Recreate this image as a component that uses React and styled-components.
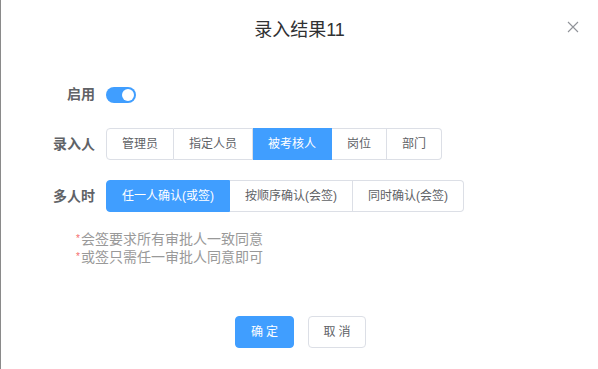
import styled, { createGlobalStyle } from 'styled-components'

const Global = createGlobalStyle`
  html, body {
    margin: 0;
    padding: 0;
    background: #fff;
  }
  body {
    font-family: "Liberation Sans", "Noto Sans CJK SC", sans-serif;
    color: #606266;
  }
`

const Page = styled.div`
  width: 598px;
  height: 369px;
  box-sizing: border-box;
  border-left: 1px solid #8a8a8a;
  background: #fff;
  display: flex;
  flex-direction: column;
`

const Header = styled.div`
  height: 58px;
  display: flex;
  align-items: center;
  justify-content: center;
  position: relative;
`

const Title = styled.div`
  font-size: 18px;
  line-height: 24px;
  color: #303133;
  margin-top: 2px;
`

const Close = styled.button`
  position: absolute;
  right: 19px;
  top: 21px;
  width: 12px;
  height: 12px;
  padding: 0;
  border: 0;
  background: none;
  cursor: pointer;
  display: flex;
`

const Form = styled.div`
  display: flex;
  flex-direction: column;
  margin-top: 20px;
`

const Row = styled.div`
  display: flex;
  align-items: center;
  height: 32px;
  margin-bottom: ${p => p.$gap || 20}px;
`

const Label = styled.label`
  width: 94px;
  padding-right: 11px;
  text-align: right;
  font-size: 14px;
  font-weight: 700;
  color: #606266;
  line-height: 32px;
`

const Switch = styled.span`
  width: 30px;
  height: 16px;
  border-radius: 8px;
  background: #409eff;
  position: relative;
  margin-top: 2px;
  &::after {
    content: '';
    position: absolute;
    right: 2px;
    top: 2px;
    width: 12px;
    height: 12px;
    border-radius: 50%;
    background: #fff;
  }
`

const Group = styled.div`
  display: flex;
`

const Seg = styled.button`
  font-family: inherit;
  font-size: 12px;
  line-height: 12px;
  height: 32px;
  padding: 0 15px;
  border: 1px solid ${p => (p.$active ? '#409eff' : '#dcdfe6')};
  border-left-width: 0;
  background: ${p => (p.$active ? '#409eff' : '#fff')};
  color: ${p => (p.$active ? '#fff' : '#606266')};
  cursor: pointer;
  &:first-child {
    border-left-width: 1px;
    border-radius: 4px 0 0 4px;
  }
  &:last-child {
    border-radius: 0 4px 4px 0;
  }
`

const Notes = styled.div`
  margin: 0 0 0 75px;
  font-size: 14px;
  line-height: 18px;
  color: #999;
`

const Star = styled.span`
  color: #f56c6c;
  font-size: 10px;
  margin-right: 1px;
  vertical-align: 2px;
`

const Footer = styled.div`
  display: flex;
  justify-content: center;
  gap: 14px;
  margin-top: 50px;
  padding-left: 2px;
`

const Btn = styled.button`
  font-family: inherit;
  font-size: 12px;
  line-height: 12px;
  height: 32px;
  width: ${p => p.$w}px;
  border-radius: 4px;
  letter-spacing: 3px;
  text-indent: 3px;
  border: 1px solid ${p => (p.$primary ? '#409eff' : '#dcdfe6')};
  background: ${p => (p.$primary ? '#409eff' : '#fff')};
  color: ${p => (p.$primary ? '#fff' : '#606266')};
  cursor: pointer;
`

const people = ['管理员', '指定人员', '被考核人', '岗位', '部门']
const modes = ['任一人确认(或签)', '按顺序确认(会签)', '同时确认(会签)']

export default function App() {
  return (
    <Page>
      <Global />
      <Header>
        <Title>录入结果11</Title>
        <Close aria-label="close">
          <svg width="12" height="12" viewBox="0 0 12 12">
            <path d="M1 1L11 11M11 1L1 11" stroke="#909399" strokeWidth="1.1" />
          </svg>
        </Close>
      </Header>
      <Form>
        <Row $gap={18}>
          <Label>启用</Label>
          <Switch />
        </Row>
        <Row>
          <Label>录入人</Label>
          <Group>
            {people.map(p => (
              <Seg key={p} $active={p === '被考核人'}>{p}</Seg>
            ))}
          </Group>
        </Row>
        <Row $gap={18}>
          <Label>多人时</Label>
          <Group>
            {modes.map((m, i) => (
              <Seg key={m} $active={i === 0}>{m}</Seg>
            ))}
          </Group>
        </Row>
        <Notes>
          <div><Star>*</Star>会签要求所有审批人一致同意</div>
          <div><Star>*</Star>或签只需任一审批人同意即可</div>
        </Notes>
      </Form>
      <Footer>
        <Btn $primary $w={59}>确定</Btn>
        <Btn $w={58}>取消</Btn>
      </Footer>
    </Page>
  )
}
